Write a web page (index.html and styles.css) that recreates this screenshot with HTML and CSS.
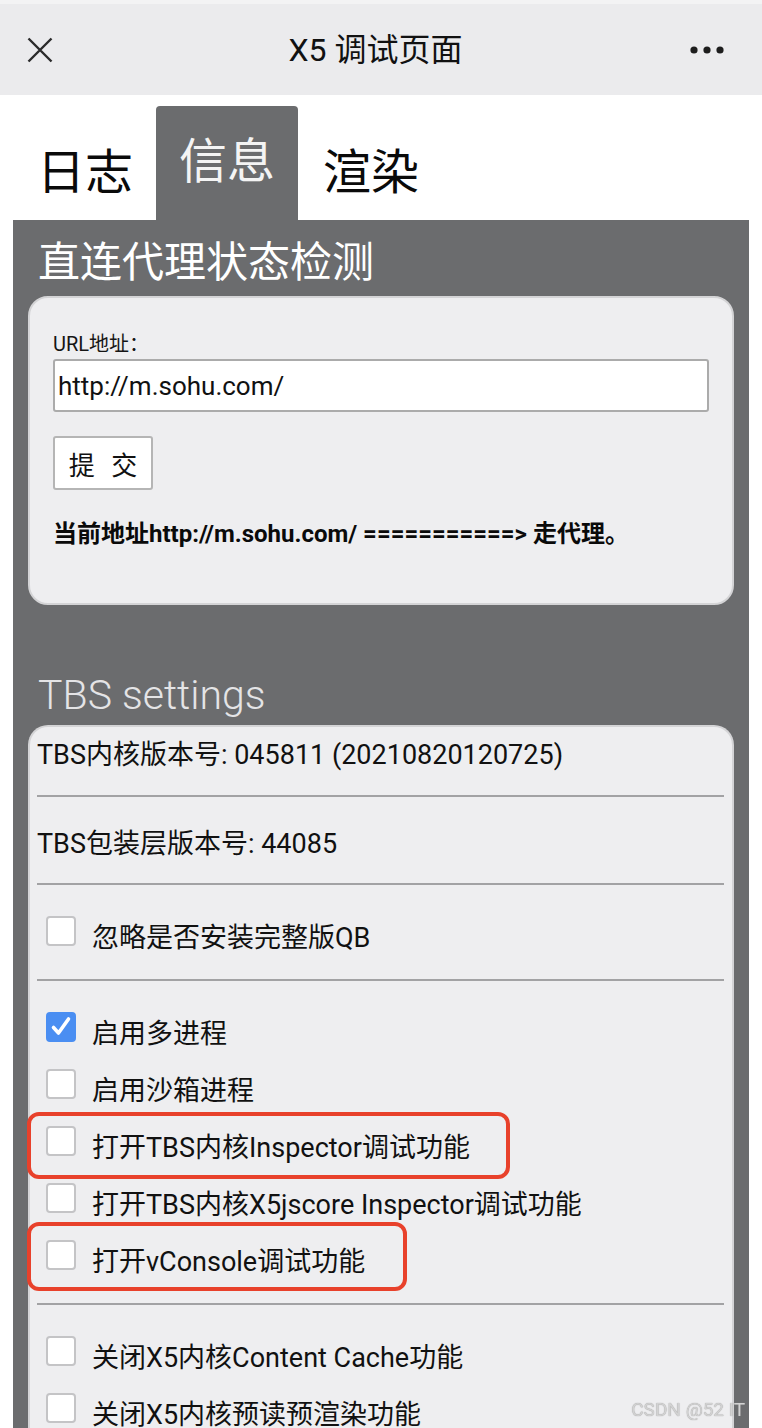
FILE: index.html
```html
<!DOCTYPE html>
<html lang="zh-CN">
<head>
<meta charset="utf-8">
<title>X5 调试页面</title>
<link rel="stylesheet" href="styles.css">
</head>
<body>
<div class="topbar">
  <svg class="ic-close" viewBox="0 0 26 26"><path d="M1.5 1.5L24.5 24.5M24.5 1.5L1.5 24.5" stroke="#2b2b2b" stroke-width="2.4" fill="none"/></svg>
  <div class="title">X5 调试页面</div>
  <svg class="ic-more" viewBox="0 0 34 8"><circle cx="4" cy="4" r="3.6"/><circle cx="17" cy="4" r="3.6"/><circle cx="30" cy="4" r="3.6"/></svg>
</div>

<div class="tabs">
  <div class="tab">日志</div>
  <div class="tab active">信息</div>
  <div class="tab">渲染</div>
</div>

<div class="panel">
  <h2 class="heading">直连代理状态检测</h2>
  <div class="card form-card">
    <div class="label">URL地址：</div>
    <input class="url" type="text" value="http://m.sohu.com/">
    <button class="submit">提 交</button>
    <p class="result">当前地址http://m.sohu.com/ ===========&gt; 走代理。</p>
  </div>

  <h2 class="settings-title">TBS settings</h2>
  <div class="card settings">
    <div class="info first">TBS内核版本号: 045811 (20210820120725)</div>
    <div class="sep"></div>
    <div class="info">TBS包装层版本号: 44085</div>
    <div class="sep"></div>
    <div class="opts">
      <div class="row"><span class="box"></span><span>忽略是否安装完整版QB</span></div>
    </div>
    <div class="sep"></div>
    <div class="opts">
      <div class="row"><span class="box checked"><svg viewBox="0 0 30 30"><path d="M7.5 15.5L12.5 21L22.5 7" stroke="#fff" stroke-width="3.6" fill="none" stroke-linecap="round" stroke-linejoin="round"/></svg></span><span>启用多进程</span></div>
      <div class="row"><span class="box"></span><span>启用沙箱进程</span></div>
      <div class="row mark mark-a"><span class="box"></span><span>打开TBS内核Inspector调试功能</span></div>
      <div class="row"><span class="box"></span><span>打开TBS内核X5jscore Inspector调试功能</span></div>
      <div class="row mark mark-b"><span class="box"></span><span>打开vConsole调试功能</span></div>
    </div>
    <div class="sep"></div>
    <div class="opts">
      <div class="row"><span class="box"></span><span>关闭X5内核Content Cache功能</span></div>
      <div class="row"><span class="box"></span><span>关闭X5内核预读预渲染功能</span></div>
    </div>
  </div>
</div>

<div class="watermark">CSDN @52 IT</div>
</body>
</html>
```

FILE: styles.css
```css
* { box-sizing: border-box; }

html, body {
  margin: 0;
  padding: 0;
  background: #ffffff;
  font-family: "Roboto", "Noto Sans CJK SC", sans-serif;
  color: #111;
}

.topbar {
  height: 95px;
  border-top: 4px solid #f3f3f4;
  background: #ebebed;
  display: flex;
  align-items: center;
  padding: 0 38px 0 27px;
}

.ic-close {
  width: 26px;
  height: 26px;
  flex: none;
}

.title {
  flex: 1;
  text-align: center;
  font-size: 32px;
  color: #111;
  line-height: 40px;
  padding-left: 8px;
}

.ic-more {
  width: 34px;
  height: 8px;
  fill: #1d1d1d;
  flex: none;
}

.tabs {
  display: flex;
  align-items: flex-end;
  padding: 11px 0 0 14px;
  height: 125px;
}

.tab {
  font-size: 48px;
  line-height: 48px;
  padding: 0 23px 23px;
  color: #0a0a0a;
}

.tab.active {
  background: #6b6c6e;
  color: #f4f4f4;
  border-radius: 4px 4px 0 0;
  padding: 32px 23px 34px;
  margin-right: 2px;
}

.panel {
  margin: 0 13px;
  background: #6b6c6e;
  padding: 22px 15px 40px;
  min-height: 1300px;
}

.heading {
  margin: 0 0 12px 10px;
  font-size: 42px;
  line-height: 42px;
  font-weight: 400;
  color: #fff;
}

.card {
  background: #eeeef0;
  border: 2px solid #d4d4d6;
  border-radius: 20px;
}

.form-card {
  padding: 34px 23px 53px;
}

.label {
  font-size: 20px;
  line-height: 24px;
  margin-bottom: 3px;
  color: #151515;
}

.url {
  display: block;
  width: 100%;
  height: 53px;
  border: 2px solid #ababab;
  border-radius: 3px;
  background: #fff;
  font-family: "Roboto", "Noto Sans CJK SC", sans-serif;
  font-size: 26px;
  color: #111;
  padding: 0 3px;
  outline: none;
}

.submit {
  display: block;
  margin-top: 24px;
  width: 100px;
  height: 54px;
  border: 2px solid #b5b5b5;
  border-radius: 3px;
  background: #fff;
  font-family: "Roboto", "Noto Sans CJK SC", sans-serif;
  font-size: 26px;
  word-spacing: 10px;
  color: #111;
  padding: 0;
}

.result {
  margin: 28px 0 0;
  font-size: 24px;
  line-height: 32px;
  font-weight: 700;
  color: #0a0a0a;
}

.settings-title {
  margin: 70px 0 10px 10px;
  font-size: 41px;
  line-height: 40px;
  font-weight: 300;
  color: #e4e4e6;
}

.settings {
  border-bottom: none;
  border-radius: 20px 20px 0 0;
  padding-bottom: 40px;
}

.info {
  font-size: 27px;
  line-height: 40px;
  padding: 27px 0 19px 7px;
}

.info.first {
  padding-top: 8px;
  padding-bottom: 20px;
}

.sep {
  height: 0;
  border-top: 2px solid #a2a2a4;
  margin: 0 8px 0 7px;
}

.opts {
  padding: 24px 0 13px;
}

.row {
  height: 57px;
  display: flex;
  align-items: center;
  padding-left: 16px;
  font-size: 27px;
  line-height: 40px;
  white-space: nowrap;
}

.box {
  width: 30px;
  height: 30px;
  flex: none;
  margin: 0 16px 13px 0;
  background: #fff;
  border: 2px solid #c4c4c6;
  border-radius: 4px;
  display: flex;
}

.box.checked {
  background: #4a8ef2;
  border-color: #4a8ef2;
}

.box.checked svg {
  width: 30px;
  height: 30px;
  margin: -2px;
}

.mark {
  position: relative;
}

.mark::after {
  content: "";
  position: absolute;
  left: -3px;
  border: 4px solid #e8412b;
  border-radius: 12px;
  pointer-events: none;
}

.mark-a::after {
  top: -7px;
  bottom: -3px;
  width: 475px;
}

.mark-b::after {
  top: -11px;
  bottom: -1px;
  width: 372px;
}

.watermark {
  position: fixed;
  right: 17px;
  bottom: 6px;
  font-size: 19px;
  line-height: 24px;
  color: #d2d2d2;
  text-shadow: 0 0 1px #8a8a8a;
}
```
